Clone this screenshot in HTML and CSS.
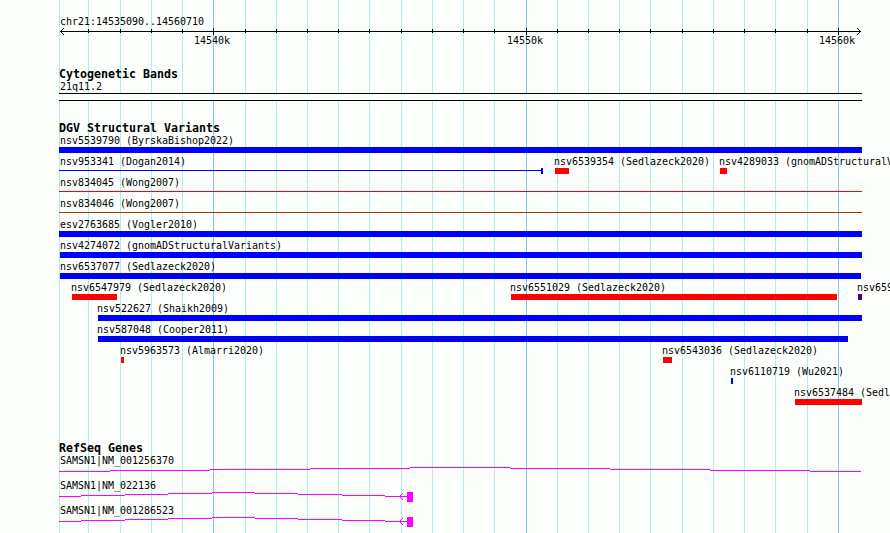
FILE: index.html
```
<!DOCTYPE html>
<html lang="en">
<head>
  <meta charset="UTF-8">
  <title>chr21:14535090..14560710</title>
  <link rel="stylesheet" href="styles.css">
</head>
<body>
  <div class="browser">
    <svg class="gridlines" width="890" height="533" shape-rendering="crispEdges">
      <path class="minor" d="M59.5 0v533M88.5 0v533M120.5 0v533M151.5 0v533M182.5 0v533M245.5 0v533M276.5 0v533M307.5 0v533M338.5 0v533M369.5 0v533M401.5 0v533M432.5 0v533M463.5 0v533M494.5 0v533M557.5 0v533M588.5 0v533M619.5 0v533M650.5 0v533M682.5 0v533M713.5 0v533M744.5 0v533M775.5 0v533M807.5 0v533"/>
      <path class="major" d="M213.5 0v533M526.5 0v533M838.5 0v533"/>
    </svg>

    <div class="ruler">
      <div class="label region">chr21:14535090..14560710</div>
      <svg class="scale" width="890" height="8" shape-rendering="crispEdges">
        <path d="M60 4.5H861"/>
        <path d="M88.5 2v4M120.5 2v4M151.5 2v4M182.5 2v4M245.5 2v4M276.5 2v4M307.5 2v4M338.5 2v4M369.5 2v4M401.5 2v4M432.5 2v4M463.5 2v4M494.5 2v4M557.5 2v4M588.5 2v4M619.5 2v4M650.5 2v4M682.5 2v4M713.5 2v4M744.5 2v4M775.5 2v4M807.5 2v4"/>
        <path d="M213.5 1v7M526.5 1v7M838.5 1v7"/>
        <path d="M61 3.5h1M62 2.5h1M63 1.5h1M61 5.5h1M62 6.5h1M63 7.5h1M859 3.5h1M858 2.5h1M857 1.5h1M859 5.5h1M858 6.5h1M857 7.5h1"/>
      </svg>
      <div class="row">
        <div class="label" style="margin-left:194px">14540k</div>
        <div class="label" style="margin-left:507px">14550k</div>
        <div class="label" style="margin-left:819px">14560k</div>
      </div>
    </div>

    <div class="track cyto">
      <h2>Cytogenetic Bands</h2>
      <div class="label region">21q11.2</div>
      <div class="band"></div>
    </div>

    <div class="track variants">
      <h2>DGV Structural Variants</h2>
      <div class="row">
        <div class="feature clipped" style="margin-left:59px"><div class="label">nsv5539790 (ByrskaBishop2022)</div><div class="bar gain" style="width:803px"></div></div>
      </div>
      <div class="row">
        <div class="feature clipped" style="margin-left:59px"><div class="label">nsv953341 (Dogan2014)</div><div class="bar line gain end" style="width:484px"></div></div>
        <div class="feature" style="margin-left:555px"><div class="label">nsv6539354 (Sedlazeck2020)</div><div class="bar loss" style="width:14px"></div></div>
        <div class="feature" style="margin-left:720px"><div class="label">nsv4289033 (gnomADStructuralVariants)</div><div class="bar loss" style="width:7px"></div></div>
      </div>
      <div class="row">
        <div class="feature clipped" style="margin-left:59px"><div class="label">nsv834045 (Wong2007)</div><div class="bar line loss" style="width:803px"></div></div>
      </div>
      <div class="row">
        <div class="feature clipped" style="margin-left:59px"><div class="label">nsv834046 (Wong2007)</div><div class="bar line mixed" style="width:803px"></div></div>
      </div>
      <div class="row">
        <div class="feature clipped" style="margin-left:59px"><div class="label">esv2763685 (Vogler2010)</div><div class="bar gain" style="width:803px"></div></div>
      </div>
      <div class="row">
        <div class="feature near" style="margin-left:60px"><div class="label">nsv4274072 (gnomADStructuralVariants)</div><div class="bar gain" style="width:802px"></div></div>
      </div>
      <div class="row">
        <div class="feature near" style="margin-left:60px"><div class="label">nsv6537077 (Sedlazeck2020)</div><div class="bar gain" style="width:801px"></div></div>
      </div>
      <div class="row">
        <div class="feature" style="margin-left:72px"><div class="label">nsv6547979 (Sedlazeck2020)</div><div class="bar loss" style="width:45px"></div></div>
        <div class="feature" style="margin-left:511px"><div class="label">nsv6551029 (Sedlazeck2020)</div><div class="bar loss" style="width:326px"></div></div>
        <div class="feature" style="margin-left:858px"><div class="label">nsv6592</div><div class="bar inversion" style="width:4px"></div></div>
      </div>
      <div class="row">
        <div class="feature" style="margin-left:98px"><div class="label">nsv522627 (Shaikh2009)</div><div class="bar gain" style="width:764px"></div></div>
      </div>
      <div class="row">
        <div class="feature" style="margin-left:98px"><div class="label">nsv587048 (Cooper2011)</div><div class="bar gain" style="width:750px"></div></div>
      </div>
      <div class="row">
        <div class="feature" style="margin-left:121px"><div class="label">nsv5963573 (Almarri2020)</div><div class="bar loss" style="width:3px"></div></div>
        <div class="feature" style="margin-left:663px"><div class="label">nsv6543036 (Sedlazeck2020)</div><div class="bar loss" style="width:9px"></div></div>
      </div>
      <div class="row">
        <div class="feature" style="margin-left:731px"><div class="label">nsv6110719 (Wu2021)</div><div class="bar gain" style="width:2px"></div></div>
      </div>
      <div class="row">
        <div class="feature" style="margin-left:795px"><div class="label">nsv6537484 (Sedlazeck2020)</div><div class="bar loss" style="width:67px"></div></div>
      </div>
    </div>

    <div class="track genes">
      <h2>RefSeq Genes</h2>
      <div class="gene">
        <div class="label region">SAMSN1|NM_001256370</div>
        <svg width="890" height="12" shape-rendering="crispEdges">
          <path d="M59 5.5H110M110 4.5H210M210 3.5H310M310 2.5H410M410 1.5H510M510 2.5H610M610 3.5H710M710 4.5H810M810 5.5H861"/>
        </svg>
      </div>
      <div class="gene">
        <div class="label region">SAMSN1|NM_022136</div>
        <svg width="890" height="12" shape-rendering="crispEdges">
          <path d="M59 5.5H81M81 4.5H125M125 3.5H168M168 2.5H212M212 1.5H255M255 2.5H298M298 3.5H342M342 4.5H385M385 5.5H407"/>
          <path d="M402 2.5h1M401 3.5h1M400 4.5h1M400 6.5h1M401 7.5h1M402 8.5h1"/>
          <rect x="407" y="1" width="6" height="10"/>
        </svg>
      </div>
      <div class="gene">
        <div class="label region">SAMSN1|NM_001286523</div>
        <svg width="890" height="12" shape-rendering="crispEdges">
          <path d="M59 5.5H81M81 4.5H125M125 3.5H168M168 2.5H212M212 1.5H255M255 2.5H298M298 3.5H342M342 4.5H385M385 5.5H407"/>
          <path d="M402 2.5h1M401 3.5h1M400 4.5h1M400 6.5h1M401 7.5h1M402 8.5h1"/>
          <rect x="407" y="1" width="6" height="10"/>
        </svg>
      </div>
    </div>
  </div>
</body>
</html>
```
FILE: styles.css
```
* {
  box-sizing: border-box;
}

body {
  margin: 0;
  background-color: #fcfefc;
  color: #000;
  font-family: "DejaVu Sans Mono", "Liberation Mono", monospace;
}

.browser {
  position: relative;
  z-index: 0;
  width: 890px;
  height: 533px;
  overflow: hidden;
}

svg {
  display: block;
}

.gridlines {
  position: absolute;
  top: 0;
  left: 0;
  z-index: -1;
}

.minor {
  stroke: #afeeee;
}

.major {
  stroke: #7fc8ec;
}

.label {
  height: 11px;
  font-size: 9.97px;
  line-height: 11px;
  white-space: nowrap;
}

.region {
  margin-left: 60px;
}

h2 {
  margin: 0 0 0 59px;
  height: 12px;
  font-size: 11.63px;
  line-height: 12px;
  font-weight: bold;
}

.row {
  display: grid;
}

.row > * {
  grid-area: 1 / 1;
}

.ruler {
  padding-top: 16px;
  height: 68px;
}

.scale path {
  stroke: #000;
}

.cyto {
  height: 54px;
}

.cyto h2 {
  margin-bottom: 1px;
}

.band {
  margin: 1px 0 0 59px;
  width: 803px;
  height: 8px;
  border-top: 1px solid #000;
  border-bottom: 1px solid #000;
  background-color: #fcfefc;
}

.variants {
  height: 320px;
}

.variants h2 {
  margin-bottom: 1px;
}

.variants .row {
  height: 21px;
}

.feature .label {
  margin-left: -1px;
}

.clipped .label {
  margin-left: 1px;
}

.near .label {
  margin-left: 0;
}

.bar {
  margin-top: 1px;
  height: 6px;
}

.line {
  height: 1px;
  margin-top: 3px;
}

/* thin line closed by a small cap on its right side */
.end {
  height: 6px;
  margin-top: 1px;
  border-right: 2px solid #00f;
  background: linear-gradient(#00f, #00f) 0 2px / 100% 1px no-repeat;
}

.gain:not(.end) {
  background-color: #00f;
}

.loss {
  background-color: #f00;
}

.mixed {
  background-color: #8b4513;
}

.inversion {
  background-color: #4b0082;
}

.genes h2 {
  margin-bottom: 1px;
}

.gene {
  height: 25px;
}

.gene path {
  stroke: #f0f;
}

.gene rect {
  fill: #f0f;
}
```
